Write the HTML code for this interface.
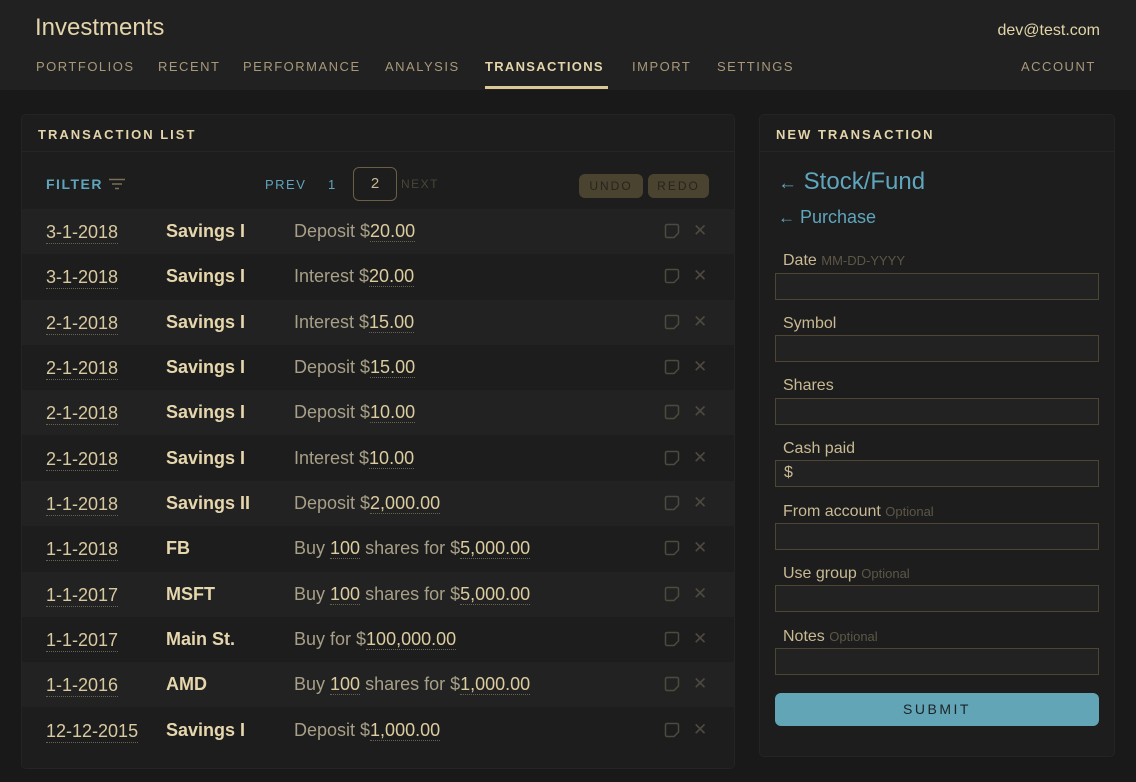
<!DOCTYPE html>
<html><head><style>
*{box-sizing:border-box;margin:0;padding:0}
body{width:1136px;height:782px;background:#181918;font-family:"Liberation Sans",sans-serif;color:#d9c9a0;position:relative;overflow:hidden}
.hdr{position:absolute;left:0;top:0;width:1136px;height:90px;background:#202120}
.title{position:absolute;left:35px;top:14px;font-size:24px;color:#e3d4aa}
.email{position:absolute;right:36px;top:22px;font-size:16px;color:#e3d4aa}
.nav{position:absolute;top:59px;font-size:13px;letter-spacing:1.5px;color:#a8987a}
.nav.act{color:#e3d4aa;font-weight:bold;letter-spacing:1.3px}
.ul{position:absolute;left:485px;top:86px;width:123px;height:3px;background:#dcc896}
.panel{position:absolute;background:#1c1d1c;border:1px solid #232423;border-radius:5px}
.ph{height:37px;border-bottom:1px solid #252625;font-size:13px;font-weight:bold;letter-spacing:2px;color:#e3d4aa;padding:12px 0 0 16px}
.row{position:absolute;left:0;width:712px;height:45px;font-size:18px}
.row.l{background:#212221}
.row span{position:absolute;top:12px}
.d{left:24px;color:#d9c9a0;border-bottom:1px dotted #6a6250;line-height:22px}
.a{left:144px;font-weight:bold;color:#e6d6ad}
.s{left:272px;color:#a89f88}
.g{color:#dccc9f;border-bottom:1px dotted #6a6250;padding-bottom:0}
.ic{left:642px;top:14px!important;width:16px;height:16px}
.x{left:671px;color:#4e4a40;font-size:17px;top:12px!important}
.lab{position:absolute;left:783px;font-size:16px;color:#c9b994}
.lab i{font-style:normal;font-size:13px;color:#5e5747}
.inp{position:absolute;left:775px;width:324px;height:27px;background:#212221;border:1px solid #4e4632}
</style></head><body>
<div class="hdr"></div>
<div class="title">Investments</div>
<div class="email">dev@test.com</div>
<div class="nav" style="left:36px">PORTFOLIOS</div>
<div class="nav" style="left:158px">RECENT</div>
<div class="nav" style="left:243px">PERFORMANCE</div>
<div class="nav" style="left:385px">ANALYSIS</div>
<div class="nav act" style="left:485px">TRANSACTIONS</div>
<div class="nav" style="left:632px">IMPORT</div>
<div class="nav" style="left:717px">SETTINGS</div>
<div class="nav" style="left:1021px">ACCOUNT</div>
<div class="ul"></div>

<div class="panel" style="left:21px;top:114px;width:714px;height:655px">
<div class="ph">TRANSACTION LIST</div>
<div style="position:absolute;left:24px;top:61px;font-size:14px;font-weight:bold;letter-spacing:1.5px;color:#5fa5bd">FILTER</div>
<svg style="position:absolute;left:86px;top:63px" width="18" height="12"><path d="M1 1.5h16M4 6h10M7 10.5h4" stroke="#7a7058" stroke-width="1.6"/></svg>
<div style="position:absolute;left:243px;top:62px;font-size:13px;letter-spacing:1.5px;color:#5fa5bd">PREV</div>
<div style="position:absolute;left:306px;top:62px;font-size:13px;color:#5fa5bd">1</div>
<div style="position:absolute;left:331px;top:52px;width:44px;height:34px;border:1px solid #6a5f45;border-radius:6px;text-align:center;line-height:32px;font-size:15px;color:#c9b994">2</div>
<div style="position:absolute;left:379px;top:62px;font-size:12px;letter-spacing:1.5px;color:#4a4536">NEXT</div>
<div style="position:absolute;left:557px;top:59px;width:64px;height:24px;background:#4a4330;border-radius:6px;text-align:center;line-height:24px;font-size:12px;letter-spacing:2px;color:#26241d">UNDO</div>
<div style="position:absolute;left:626px;top:59px;width:61px;height:24px;background:#4a4330;border-radius:6px;text-align:center;line-height:24px;font-size:12px;letter-spacing:2px;color:#26241d">REDO</div>

<svg width="0" height="0" style="position:absolute"><defs><symbol id="n" viewBox="0 0 16 16"><path d="M3 1.5h10a1.5 1.5 0 0 1 1.5 1.5v7l-4.5 4.5H3A1.5 1.5 0 0 1 1.5 13V3A1.5 1.5 0 0 1 3 1.5z" fill="none" stroke="#4e4a40" stroke-width="1.5"/></symbol></defs></svg>

<div class="row l" style="top:94px"><span class="d">3-1-2018</span><span class="a">Savings I</span><span class="s">Deposit $<span class="g" style="position:static">20.00</span></span><svg class="ic" style="position:absolute;left:642px;top:14px"><use href="#n"/></svg><span class="x">✕</span></div>
<div class="row" style="top:139px"><span class="d">3-1-2018</span><span class="a">Savings I</span><span class="s">Interest $<span class="g" style="position:static">20.00</span></span><svg class="ic" style="position:absolute;left:642px;top:14px"><use href="#n"/></svg><span class="x">✕</span></div>
<div class="row l" style="top:185px"><span class="d">2-1-2018</span><span class="a">Savings I</span><span class="s">Interest $<span class="g" style="position:static">15.00</span></span><svg class="ic" style="position:absolute;left:642px;top:14px"><use href="#n"/></svg><span class="x">✕</span></div>
<div class="row" style="top:230px"><span class="d">2-1-2018</span><span class="a">Savings I</span><span class="s">Deposit $<span class="g" style="position:static">15.00</span></span><svg class="ic" style="position:absolute;left:642px;top:14px"><use href="#n"/></svg><span class="x">✕</span></div>
<div class="row l" style="top:275px"><span class="d">2-1-2018</span><span class="a">Savings I</span><span class="s">Deposit $<span class="g" style="position:static">10.00</span></span><svg class="ic" style="position:absolute;left:642px;top:14px"><use href="#n"/></svg><span class="x">✕</span></div>
<div class="row" style="top:321px"><span class="d">2-1-2018</span><span class="a">Savings I</span><span class="s">Interest $<span class="g" style="position:static">10.00</span></span><svg class="ic" style="position:absolute;left:642px;top:14px"><use href="#n"/></svg><span class="x">✕</span></div>
<div class="row l" style="top:366px"><span class="d">1-1-2018</span><span class="a">Savings II</span><span class="s">Deposit $<span class="g" style="position:static">2,000.00</span></span><svg class="ic" style="position:absolute;left:642px;top:14px"><use href="#n"/></svg><span class="x">✕</span></div>
<div class="row" style="top:411px"><span class="d">1-1-2018</span><span class="a">FB</span><span class="s">Buy <span class="g" style="position:static">100</span> shares for $<span class="g" style="position:static">5,000.00</span></span><svg class="ic" style="position:absolute;left:642px;top:14px"><use href="#n"/></svg><span class="x">✕</span></div>
<div class="row l" style="top:457px"><span class="d">1-1-2017</span><span class="a">MSFT</span><span class="s">Buy <span class="g" style="position:static">100</span> shares for $<span class="g" style="position:static">5,000.00</span></span><svg class="ic" style="position:absolute;left:642px;top:14px"><use href="#n"/></svg><span class="x">✕</span></div>
<div class="row" style="top:502px"><span class="d">1-1-2017</span><span class="a">Main St.</span><span class="s">Buy for $<span class="g" style="position:static">100,000.00</span></span><svg class="ic" style="position:absolute;left:642px;top:14px"><use href="#n"/></svg><span class="x">✕</span></div>
<div class="row l" style="top:547px"><span class="d">1-1-2016</span><span class="a">AMD</span><span class="s">Buy <span class="g" style="position:static">100</span> shares for $<span class="g" style="position:static">1,000.00</span></span><svg class="ic" style="position:absolute;left:642px;top:14px"><use href="#n"/></svg><span class="x">✕</span></div>
<div class="row" style="top:593px"><span class="d">12-12-2015</span><span class="a">Savings I</span><span class="s">Deposit $<span class="g" style="position:static">1,000.00</span></span><svg class="ic" style="position:absolute;left:642px;top:14px"><use href="#n"/></svg><span class="x">✕</span></div>
</div>

<div class="panel" style="left:759px;top:114px;width:356px;height:643px">
<div class="ph">NEW TRANSACTION</div>
</div>
<div style="position:absolute;left:778px;top:168px;font-size:24px;color:#5fa5bd"><span style="font-size:19px">←</span> Stock/Fund</div>
<div style="position:absolute;left:778px;top:207px;font-size:18px;color:#5fa5bd"><span style="font-size:17px">←</span> Purchase</div>
<div class="lab" style="top:252px">Date <i>MM-DD-YYYY</i></div><div class="inp" style="top:273px"></div>
<div class="lab" style="top:315px">Symbol</div><div class="inp" style="top:335px"></div>
<div class="lab" style="top:377px">Shares</div><div class="inp" style="top:398px"></div>
<div class="lab" style="top:440px">Cash paid</div><div class="inp" style="top:460px;padding:3px 8px;font-size:16px;color:#c9b994">$</div>
<div class="lab" style="top:503px">From account <i>Optional</i></div><div class="inp" style="top:523px"></div>
<div class="lab" style="top:565px">Use group <i>Optional</i></div><div class="inp" style="top:585px"></div>
<div class="lab" style="top:628px">Notes <i>Optional</i></div><div class="inp" style="top:648px"></div>
<div style="position:absolute;left:775px;top:693px;width:324px;height:33px;background:#62a5b7;border-radius:6px;text-align:center;line-height:33px;font-size:14px;letter-spacing:2.5px;color:#1d2326">SUBMIT</div>
</body></html>
